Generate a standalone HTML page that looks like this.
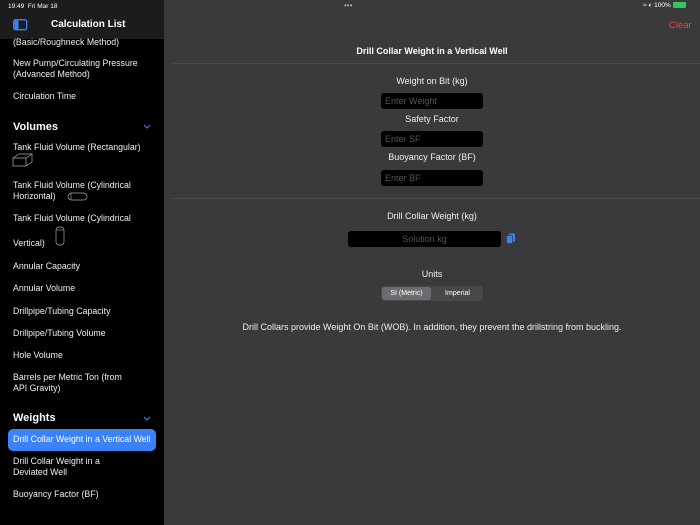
<!DOCTYPE html><html><head><style>
*{margin:0;padding:0;box-sizing:border-box}
body{width:700px;height:525px;overflow:hidden;background:#3a3a3c;font-family:"Liberation Sans",sans-serif;color:#fff;position:relative}
.a{position:absolute;white-space:nowrap}
#sb{position:absolute;left:0;top:0;width:164px;height:525px;background:#000}
#hd{position:absolute;left:0;top:0;width:164px;height:39px;background:#1c1c1e}
.s{font-size:8.8px;left:13px;line-height:11px;color:#eee}
.h{font-size:11px;font-weight:bold;left:13px}
.c{position:absolute;font-size:9px;text-align:center;left:164px;width:536px;color:#eee}
.in{position:absolute;background:#000;border-radius:3px;font-size:9px;color:#555;padding-left:4px;line-height:16px}
</style></head><body>
<div id="sb"></div><div id="hd"></div>
<div class="a" style="left:8px;top:3px;font-size:6.5px">19:49 &nbsp;Fri Mar 18</div>
<svg class="a" style="left:13px;top:19px" width="15" height="12"><rect x="0.7" y="0.7" width="13" height="10" rx="2" fill="none" stroke="#3b82f6" stroke-width="1.3"/><rect x="1.5" y="1.5" width="4" height="8.5" fill="#3b82f6"/></svg>
<div class="a" style="left:51px;top:19px;font-size:10px;font-weight:bold">Calculation List</div>
<div class="a s" style="top:37px">(Basic/Roughneck Method)</div>
<div class="a s" style="top:58px">New Pump/Circulating Pressure<br>(Advanced Method)</div>
<div class="a s" style="top:91px">Circulation Time</div>
<div class="a h" style="top:121px">Volumes</div>
<svg class="a" style="left:143px;top:124px" width="8" height="6"><path d="M1 1l3 3 3-3" fill="none" stroke="#3b82f6" stroke-width="1.1"/></svg>
<div class="a s" style="top:142px">Tank Fluid Volume (Rectangular)</div>
<svg class="a" style="left:12px;top:153px" width="22" height="14"><path d="M1 5h13v8H1zM1 5l6-4h13l-6 4M20 1v8l-6 4" fill="none" stroke="#aaa" stroke-width=".7"/></svg>
<div class="a s" style="top:180px">Tank Fluid Volume (Cylindrical<br>Horizontal)</div>
<svg class="a" style="left:67px;top:192px" width="22" height="9"><rect x="1" y="1" width="19" height="7" rx="3.5" fill="none" stroke="#aaa" stroke-width=".7"/><path d="M4 1v7" stroke="#aaa" stroke-width=".6"/></svg>
<div class="a s" style="top:213px">Tank Fluid Volume (Cylindrical</div>
<svg class="a" style="left:55px;top:226px" width="10" height="20"><rect x="1" y="1" width="8" height="18" rx="3" fill="none" stroke="#aaa" stroke-width=".7"/><path d="M1 4h8" stroke="#aaa" stroke-width=".6"/></svg>
<div class="a s" style="top:238px">Vertical)</div>
<div class="a s" style="top:261px">Annular Capacity</div>
<div class="a s" style="top:283px">Annular Volume</div>
<div class="a s" style="top:306px">Drillpipe/Tubing Capacity</div>
<div class="a s" style="top:328px">Drillpipe/Tubing Volume</div>
<div class="a s" style="top:350px">Hole Volume</div>
<div class="a s" style="top:372px">Barrels per Metric Ton (from<br>API Gravity)</div>
<div class="a h" style="top:412px">Weights</div>
<svg class="a" style="left:143px;top:416px" width="8" height="6"><path d="M1 1l3 3 3-3" fill="none" stroke="#3b82f6" stroke-width="1.1"/></svg>
<div class="a" style="left:8px;top:429px;width:148px;height:22px;background:#3b82f6;border-radius:5px"></div>
<div class="a s" style="top:434px;color:#fff">Drill Collar Weight in a Vertical Well</div>
<div class="a s" style="top:456px">Drill Collar Weight in a<br>Deviated Well</div>
<div class="a s" style="top:489px">Buoyancy Factor (BF)</div>

<div class="a" style="left:344px;top:1px;font-size:8px;color:#aaa">&bull;&bull;&bull;</div>
<div class="a" style="left:643px;top:2px;font-size:6.5px">&#8776; &#9680; 100% <span style="display:inline-block;width:13px;height:6px;background:#34c759;border-radius:1px;vertical-align:middle"></span></div>
<div class="a" style="left:669px;top:20px;font-size:9.5px;color:#e5484d">Clear</div>
<div class="c" style="top:46px;font-size:9px;font-weight:bold;color:#fff">Drill Collar Weight in a Vertical Well</div>
<div class="a" style="left:170px;top:63px;width:530px;height:1px;background:#4a4a4c"></div>
<div class="c" style="top:76px">Weight on Bit (kg)</div>
<div class="in" style="left:381px;top:93px;width:102px;height:16px">Enter Weight</div>
<div class="c" style="top:114px">Safety Factor</div>
<div class="in" style="left:381px;top:131px;width:102px;height:16px">Enter SF</div>
<div class="c" style="top:152px">Buoyancy Factor (BF)</div>
<div class="in" style="left:381px;top:170px;width:102px;height:16px">Enter BF</div>
<div class="a" style="left:170px;top:198px;width:530px;height:1px;background:#4a4a4c"></div>
<div class="c" style="top:211px">Drill Collar Weight (kg)</div>
<div class="in" style="left:348px;top:231px;width:153px;height:16px;text-align:center;padding:0">Solution kg</div>
<svg class="a" style="left:506px;top:233px" width="10" height="11"><rect x="3" y="0.5" width="6" height="8" rx="1" fill="#3b82f6"/><rect x="0.5" y="2.5" width="6" height="8" rx="1" fill="#3b82f6" stroke="#3a3a3c" stroke-width=".7"/></svg>
<div class="c" style="top:269px">Units</div>
<div class="a" style="left:381px;top:286px;width:102px;height:15px;background:#48484a;border-radius:3px"></div>
<div class="a" style="left:382px;top:287px;width:49px;height:13px;background:#6c6c70;border-radius:3px;font-size:7px;text-align:center;line-height:13px">SI (Metric)</div>
<div class="a" style="left:433px;top:287px;width:49px;height:13px;font-size:7px;text-align:center;line-height:13px">Imperial</div>
<div class="c" style="top:322px">Drill Collars provide Weight On Bit (WOB). In addition, they prevent the drillstring from buckling.</div>
</body></html>
